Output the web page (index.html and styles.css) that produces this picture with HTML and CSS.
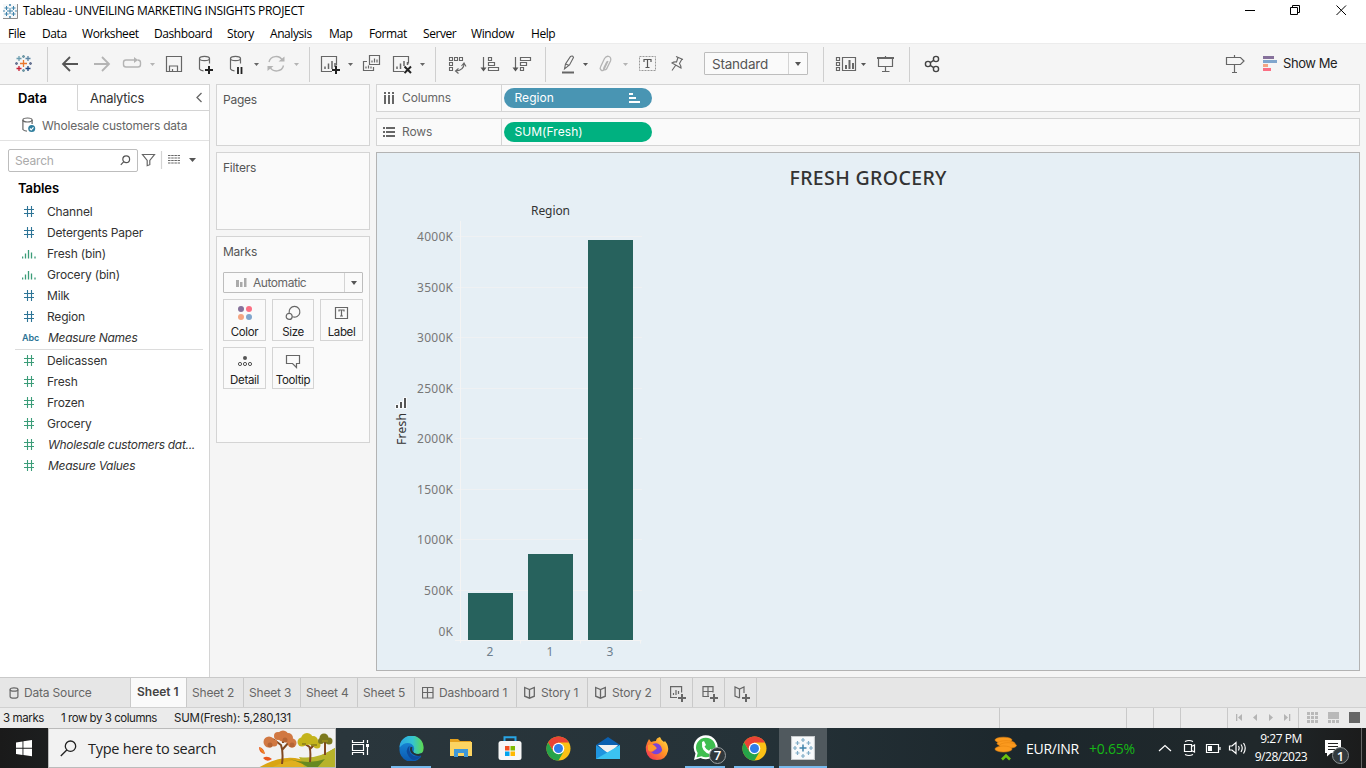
FILE: index.html
```html
<!DOCTYPE html>
<html lang="en">
<head>
<meta charset="utf-8">
<title>Tableau - UNVEILING MARKETING INSIGHTS PROJECT</title>
<link rel="stylesheet" href="styles.css">
</head>
<body>
<svg class="defs" width="0" height="0">
  <defs>
    <g id="hash"><path d="M1 4.5h10M1 8.5h10M4.5 1v11M8.5 1v11" fill="none" stroke="currentColor" stroke-width="1.1"/></g>
    <g id="bins"><path d="M.6 9.500v2M3.500 6.500v5M6.500 3v8.500M9.500 5.500v6M13 9.500v2" fill="none" stroke="currentColor" stroke-width="1.3"/></g>
    <g id="caret"><path d="M-2.500-1.500h5L0 1.500z"/></g>
    <g id="book" fill="none" stroke="#666" stroke-width="1.3"><path d="M.7 1.500 5.500 3.500l4.800-2v8.700L5.500 12.200.7 10.200zM5.500 3.500v8.500"/></g>
    <g id="chrome">
      <circle r="12" fill="#fbc116"/>
      <path d="M-10.400-6A12 12 0 0 1 10.400-6L0-6-5.200 3z" fill="#ea4335"/>
      <path d="M-10.400-6A12 12 0 0 0 0 12L5.200 3-5.200 3z" fill="#26a349"/>
      <circle r="5.800" fill="#fff"/><circle r="4.500" fill="#2f7de9"/>
    </g>
  </defs>
</svg>
<div class="app">
  <header class="titlebar">
    <svg width="23" height="22" viewBox="0 0 23 22"><path d="M3 4h14v14H3z" fill="#f6f8f9"/><path d="M3 18.500h14.500V4" fill="none" stroke="#8c8c8c"/><path d="M10 8v6M7 11h6M6.500 6v4M4.500 8h4M13.500 6v4M11.500 8h4M6.500 12v4M4.500 14h4M13.500 12v4M11.500 14h4M10 4v2M9 5h2M10 16v2M9 17h2M3 11h2M15 11h2" stroke="#3f83ab" fill="none"/></svg>
    <span class="win title">Tableau - UNVEILING MARKETING INSIGHTS PROJECT</span>
    <svg class="controls" width="140" height="22" viewBox="1226 0 140 22" fill="none" stroke="#000"><path d="M1245 10.500h10M1290.500 7.500h7v7h-7zM1292.500 7.500v-2h7v7h-2M1336.500 5.500l9.500 9.500M1346 5.500l-9.500 9.500"/></svg>
  </header>
  <nav class="menubar win">
    <span>File</span><span>Data</span><span>Worksheet</span><span>Dashboard</span><span>Story</span><span>Analysis</span><span>Map</span><span>Format</span><span>Server</span><span>Window</span><span>Help</span>
  </nav>
  <div class="toolbar">
    <svg width="47" height="40" viewBox="0 44 47 40" fill="none" stroke-width="1.300">
      <path d="M20 63.500h7M23.500 60v7" stroke="#e8762c"/><path d="M16.500 58.500h5M19 56v5" stroke="#6a9db0"/><path d="M25.500 58.500h5M28 56v5" stroke="#5c86a5"/><path d="M16.500 68.500h5M19 66v5" stroke="#c72035"/><path d="M25.500 68.500h5M28 66v5" stroke="#1f447e"/><path d="M22 56.500h3M23.500 55v3M22 70.500h3M23.500 69v3" stroke="#7199a6"/><path d="M15 63.500h3M16.500 62v3M29 63.500h3M30.500 62v3" stroke="#6b7795"/>
    </svg><i class="sep"></i>
    <svg width="40" height="40" viewBox="48 44 40 40" fill="none" stroke="#555" stroke-width="1.800"><path d="M78 64H63M70 57l-7 7 7 7"/></svg>
    <svg width="30" height="40" viewBox="88 44 30 40" fill="none" stroke="#b4b4b4" stroke-width="1.800"><path d="M94 64h15M102 57l7 7-7 7"/></svg>
    <svg width="42" height="40" viewBox="118 44 42 40" fill="none" stroke="#b4b4b4" stroke-width="1.400"><path d="M135 60h-9q-2.500 0-2.500 2.500v2q0 2.500 2.500 2.500h12q2.500 0 2.500-2.500v-2q0-2.500-3-2.500"/><path d="M134 57l4 3-4 3z" fill="#b4b4b4" stroke="none"/><use href="#caret" x="152.500" y="64.500" fill="#b4b4b4" stroke="none"/></svg>
    <svg width="30" height="40" viewBox="160 44 30 40" fill="none" stroke="#666" stroke-width="1.200"><path d="M166.500 56.500h15v15h-15zM169.500 71v-5h8v5M172.500 71v-2"/></svg>
    <svg width="32" height="40" viewBox="190 44 32 40" fill="none" stroke="#666" stroke-width="1.200"><ellipse cx="204.500" cy="58.500" rx="5" ry="2.200"/><path d="M199.500 58.500v10.500q1 1.700 4 1.900M209.500 58.500v5"/><path d="M205 70h8M209 66v8" stroke="#222" stroke-width="2"/></svg>
    <svg width="40" height="40" viewBox="222 44 40 40" fill="none" stroke="#666" stroke-width="1.200"><ellipse cx="235.500" cy="58.500" rx="5" ry="2.200"/><path d="M230.500 58.500v10.500q1 1.700 4 1.900M240.500 58.500v5"/><path d="M238 67v7M241.500 67v7" stroke="#222" stroke-width="1.800"/><use href="#caret" x="256.500" y="64.500" fill="#666" stroke="none"/></svg>
    <svg width="47" height="40" viewBox="262 44 47 40" fill="none" stroke="#b4b4b4" stroke-width="1.400"><path d="M269 62a7.200 7 0 0 1 13.500-1.500M283.500 65.500a7.200 7 0 0 1-13.500 1.500"/><path d="M278.500 61.500h6v-5zM273.500 66h-6v5z" fill="#b4b4b4" stroke="none"/><use href="#caret" x="296.500" y="64.500" fill="#b4b4b4" stroke="none"/></svg><i class="sep"></i>
    <svg width="47" height="40" viewBox="310 44 47 40" fill="none" stroke="#666" stroke-width="1.200"><path d="M332 71.500h-10.500v-15h15v9"/><path d="M325 69v-2.500M328.500 69v-5.500M332 69v-8M335 67v-4" stroke-width="1.500"/><path d="M332 70h8M336 66v8" stroke="#222" stroke-width="2"/><use href="#caret" x="350.500" y="64.500" fill="#666" stroke="none"/></svg>
    <svg width="29" height="40" viewBox="357 44 29 40" fill="none" stroke="#666" stroke-width="1.200"><path d="M369.500 55.500h10v9h-10zM367 61.500h-3.500v9h10v-3.500M372 62.500v-2M374.500 62.500v-4M377 62.500v-3M366 68.500v-2M368.500 68.500v-3M371 68.500v-2"/></svg>
    <svg width="49" height="40" viewBox="386 44 49 40" fill="none" stroke="#666" stroke-width="1.200"><path d="M404 71.500h-10.500v-15h15v7"/><path d="M397 69v-2.500M400.500 69v-5.500M404 66v-5M407.500 65v-3" stroke-width="1.500"/><path d="M404.500 66.500l6.500 6.500M411 66.500l-6.500 6.500" stroke="#222" stroke-width="2"/><use href="#caret" x="422.500" y="64.500" fill="#666" stroke="none"/></svg><i class="sep"></i>
    <svg width="37" height="40" viewBox="436 44 37 40" fill="none" stroke="#666" stroke-width="1.100"><path d="M449.500 57.500h3v3h-3zM454.500 57.500h3v3h-3zM459.500 57.500h3v3h-3zM449.500 62.500h3v3h-3zM449.500 67.500h3v3h-3zM464 64q0 6-8 7M461.500 66l2.500-3 2 3.500M458.500 68.500l-3 2.500 3 2.500"/></svg>
    <svg width="32" height="40" viewBox="473 44 32 40" fill="none" stroke="#666" stroke-width="1.200"><path d="M483.500 57v12M488.500 57.500h3v3h-3zM488.500 62.500h6v3h-6zM488.500 67.500h10v3h-10z"/><path d="M480.500 67.500h6l-3 4z" fill="#555" stroke="none"/></svg>
    <svg width="40" height="40" viewBox="505 44 40 40" fill="none" stroke="#666" stroke-width="1.200"><path d="M515.500 57v12M520.500 57.500h10v3h-10zM520.500 62.500h6v3h-6zM520.500 67.500h3v3h-3z"/><path d="M512.500 67.500h6l-3 4z" fill="#555" stroke="none"/></svg><i class="sep"></i>
    <svg width="46" height="40" viewBox="546 44 46 40" fill="none" stroke="#666" stroke-width="1.100"><path d="M564.500 69l1-5 5-7.500q2-1.500 3 1l-4 7.500zM565.500 64l4 1.500"/><path d="M562 72.500h12" stroke-width="2"/><use href="#caret" x="585.500" y="64.500" fill="#555" stroke="none"/></svg>
    <svg width="40" height="40" viewBox="592 44 40 40" fill="none" stroke="#b4b4b4" stroke-width="1.300"><path d="M608 61l-4 8.500q-1.500 2-3 .5t-.5-3l4-8.500q2-3 4.500-2t1.500 4.500l-4 8q-1.500 1.500-2.500.5-.6-.8 0-2l3-6"/><use href="#caret" x="625.500" y="64.500" fill="#b4b4b4" stroke="none"/></svg>
    <svg width="30" height="40" viewBox="632 44 30 40" fill="none" stroke="#999"><path d="M639.500 56.500h16v14h-16z" stroke-dasharray="2 1"/><path d="M644 62v-2.500h7V62M647.500 59.500v8M645.500 67.500h4" stroke="#555" stroke-width="1.200"/></svg>
    <svg width="42" height="40" viewBox="662 44 42 40" fill="none" stroke="#666" stroke-width="1.100"><path d="M676 56.500l7 3M678 57.500l-1.500 4.500q-2.500-.5-4.500 1l9 5q0-2.500-1.500-4.500l2.500-4.500M675.500 65.500l-3.500 5"/></svg>
    <div class="select"><span class="tb">Standard</span><b></b></div>
    <span class="gap15"></span><i class="sep"></i>
    <svg width="46" height="40" viewBox="824 44 46 40" fill="none" stroke="#666" stroke-width="1.200"><path d="M836.500 57.500h3v3h-3zM836.500 62.500h3v3h-3zM836.500 67.500h3v3h-3zM842.500 57.500h13v13h-13z"/><path d="M846 69v-4M849.500 69v-9M853 69v-6" stroke-width="2"/><use href="#caret" x="863.500" y="64.500" fill="#555" stroke="none"/></svg>
    <svg width="39" height="40" viewBox="870 44 39 40" fill="none" stroke="#666" stroke-width="1.200"><path d="M878.500 58v8.500h14V58M885.500 67v4.500M882 71.500h7.500M885.500 56v1"/><path d="M877 58h17" stroke-width="2"/></svg><i class="sep"></i>
    <svg width="40" height="40" viewBox="910 44 40 40" fill="none" stroke="#444" stroke-width="1.400"><circle cx="928" cy="64" r="2.600"/><circle cx="936" cy="59" r="2.600"/><circle cx="936" cy="69" r="2.600"/><path d="M930.200 62.600l3.500-2.200M930.200 65.400l3.500 2.200"/></svg>
    <svg class="push" width="33" height="40" viewBox="1220 44 33 40" fill="none" stroke="#666" stroke-width="1.200"><path d="M1226.500 57.500h14l3.500 3.500-3.500 3.500h-14zM1234.500 55v2.500M1234.500 65v7M1232 72.500h5"/></svg>
    <svg width="30" height="40" viewBox="1253 44 30 40"><path fill="#86719b" d="M1263 56h11v3h-11z"/><path fill="#80a6cd" d="M1263 60h14v3h-14z"/><path fill="#f4a582" d="M1263 64h5v3h-5z"/><path fill="#fb6f83" d="M1263 68h8v3h-8z"/></svg>
    <span class="tb showme">Show Me</span>
  </div>

  <main class="main">
    <aside class="side">
      <div class="sidetabs"><div class="stab on"><span>Data</span></div><div class="stab"><span>Analytics</span><svg width="8" height="12" viewBox="0 0 8 12"><path d="M6.500 1 2 5.500l4.500 4.500" fill="none" stroke="#666" stroke-width="1.300"/></svg></div></div>
      <div class="source"><svg width="14" height="16" viewBox="0 0 14 16" fill="none" stroke="#666" stroke-width="1.200"><ellipse cx="5.500" cy="3" rx="4.600" ry="2"/><path d="M.9 3v9.500q1 1.500 4 1.700M10.100 3v4"/><circle cx="9.700" cy="11.500" r="3.500" fill="#2f7e9e" stroke="none"/><path d="M7.900 11.500l1.300 1.400 2.300-2.600" stroke="#fff"/></svg><span>Wholesale customers data</span></div>
      <div class="searchrow">
        <div class="search"><span>Search</span><svg width="11" height="11" viewBox="0 0 11 11" fill="none" stroke="#555" stroke-width="1.200"><circle cx="6.200" cy="4.200" r="3.400"/><path d="M3.800 6.700.8 9.800"/></svg></div>
        <svg width="70" height="23" viewBox="138 149 70 23" fill="none" stroke="#666" stroke-width="1.200"><path d="M142.500 154.500h12l-4.700 6v4.200l-2.600 1v-5.200z"/><path d="M161.500 151v18" stroke="#d4d4d4"/><path d="M168 155.500h12M168 158h12M168 160.500h12M168 163h12" stroke-dasharray="2.500 .7"/><path d="M189 158h7l-3.500 4z" fill="#555" stroke="none"/></svg>
      </div>
      <div class="tables"><span>Tables</span></div>
      <ul class="fields dim">
        <li><svg width="15" height="13"><use href="#hash" x="1"/></svg><span>Channel</span></li>
        <li><svg width="15" height="13"><use href="#hash" x="1"/></svg><span>Detergents Paper</span></li>
        <li class="m"><svg width="15" height="13"><use href="#bins"/></svg><span>Fresh (bin)</span></li>
        <li class="m"><svg width="15" height="13"><use href="#bins"/></svg><span>Grocery (bin)</span></li>
        <li><svg width="15" height="13"><use href="#hash" x="1"/></svg><span>Milk</span></li>
        <li><svg width="15" height="13"><use href="#hash" x="1"/></svg><span>Region</span></li>
        <li class="it"><b class="abc">Abc</b><span>Measure Names</span></li>
      </ul>
      <ul class="fields mea">
        <li class="m"><svg width="15" height="13"><use href="#hash" x="1"/></svg><span>Delicassen</span></li>
        <li class="m"><svg width="15" height="13"><use href="#hash" x="1"/></svg><span>Fresh</span></li>
        <li class="m"><svg width="15" height="13"><use href="#hash" x="1"/></svg><span>Frozen</span></li>
        <li class="m"><svg width="15" height="13"><use href="#hash" x="1"/></svg><span>Grocery</span></li>
        <li class="m it"><svg width="15" height="13"><use href="#hash" x="1"/></svg><span>Wholesale customers dat...</span></li>
        <li class="m it"><svg width="15" height="13"><use href="#hash" x="1"/></svg><span>Measure Values</span></li>
      </ul>
    </aside>

    <section class="cards">
      <div class="card pages"><h3>Pages</h3></div>
      <div class="card filters"><h3>Filters</h3></div>
      <div class="card marks"><h3>Marks</h3>
        <div class="marktype"><svg width="11" height="12" viewBox="0 0 11 12"><path fill="#aaa" d="M0 3h3v7H0zM4 5h2.500v5H4zM8 1h2.500v9H8z"/></svg><span>Automatic</span><b></b></div>
        <div class="btns">
          <div class="btn"><svg width="16" height="16" viewBox="0 0 16 16"><circle cx="4" cy="4" r="3" fill="#86719b"/><circle cx="12" cy="4" r="3" fill="#fb6f83"/><circle cx="4" cy="12" r="3" fill="#f4a582"/><circle cx="12" cy="12" r="3" fill="#80a6cd"/></svg><span>Color</span></div>
          <div class="btn"><svg width="16" height="16" viewBox="0 0 16 16" fill="none" stroke="#666" stroke-width="1.200"><path d="M4.200 7.800A5.400 5.400 0 1 1 7.500 11.800"/><circle cx="4.200" cy="11.400" r="3"/></svg><span>Size</span></div>
          <div class="btn"><svg width="16" height="16" viewBox="0 0 16 16" fill="none" stroke="#666" stroke-width="1.200"><path d="M1.500 2.500h12v11h-12zM5 6.500v-1.500h5v1.500M7.500 5v6M6 11h3"/></svg><span>Label</span></div>
          <div class="btn"><svg width="16" height="16" viewBox="0 0 16 16" fill="none" stroke="#555"><circle cx="8" cy="5" r="2" fill="#555" stroke="none"/><circle cx="3" cy="11" r="1.600"/><circle cx="8" cy="11" r="1.600"/><circle cx="13" cy="11" r="1.600"/></svg><span>Detail</span></div>
          <div class="btn"><svg width="16" height="16" viewBox="0 0 16 16" fill="none" stroke="#666" stroke-width="1.200"><path d="M1.500 2.500h13v8h-3v4l-4-4h-6z"/></svg><span>Tooltip</span></div>
        </div>
      </div>
    </section>

    <section class="view">
      <div class="shelf"><div class="label"><svg width="12" height="14" viewBox="0 0 12 14"><path stroke="#666" stroke-width="2" d="M2 1v2M6 1v2M10 1v2M2 4v9M6 4v9M10 4v9"/></svg><span>Columns</span></div><div class="pill blue"><span>Region</span><svg width="11" height="10" viewBox="0 0 11 10"><path fill="#fff" d="M0 0h4v2H0zM0 4h7v2H0zM0 8h11v2H0z"/></svg></div></div>
      <div class="shelf"><div class="label"><svg width="12" height="14" viewBox="0 0 12 14"><path stroke="#666" stroke-width="2" d="M0 3h2M3 3h9M0 7h2M3 7h9M0 11h2M3 11h9"/></svg><span>Rows</span></div><div class="pill green"><span>SUM(Fresh)</span></div></div>
      <div class="canvas">
        <svg width="982" height="517" viewBox="377 153 982 517">
          <g class="grid"><path d="M455 236.500h187M455 287.500h187M455 337.500h187M455 388.500h187M455 438.500h187M455 489.500h187M455 539.500h187M455 590.500h187"/></g>
          <path class="axis" d="M460.500 221v422M455 640.500h186.500M520.500 640v3.500M580.500 640v3.500M640.500 640v3.500"/>
          <g class="bars"><rect x="468" y="593" width="45" height="47"/><rect x="528" y="554" width="45" height="86"/><rect x="588" y="240" width="45" height="400"/></g>
          <text class="ctitle" x="868" y="185" text-anchor="middle" textLength="157">FRESH GROCERY</text>
          <text class="chead" x="550.500" y="215" text-anchor="middle" textLength="39">Region</text>
          <g class="tick" text-anchor="end"><text x="453" y="241" textLength="36">4000K</text><text x="453" y="292" textLength="36">3500K</text><text x="453" y="342" textLength="36">3000K</text><text x="453" y="393" textLength="36">2500K</text><text x="453" y="443" textLength="36">2000K</text><text x="453" y="494" textLength="36">1500K</text><text x="453" y="544" textLength="36">1000K</text><text x="453" y="595" textLength="29">500K</text><text x="453" y="636" textLength="14.500">0K</text></g>
          <g class="tick cat" text-anchor="middle"><text x="490" y="656">2</text><text x="550" y="656">1</text><text x="610" y="656">3</text></g>
          <text class="chead" transform="translate(406 445) rotate(-90)" textLength="32">Fresh</text>
          <path d="M396 405h2v3h-2zM400 402h2v6h-2zM404 398h2v10h-2z" fill="#555" stroke="#fff" stroke-width="1.500" paint-order="stroke"/>
        </svg>
      </div>
    </section>
  </main>

  <div class="sheets">
    <div class="sh ds"><svg width="10" height="12" viewBox="0 0 10 12" fill="none" stroke="#666" stroke-width="1.200"><ellipse cx="5" cy="2.500" rx="3.900" ry="1.700"/><path d="M1.100 2.500v7q0 1.700 3.900 1.700t3.900-1.700v-7"/></svg><span>Data Source</span></div>
    <div class="sh on"><span>Sheet 1</span></div>
    <div class="sh s57"><span>Sheet 2</span></div><div class="sh s57"><span>Sheet 3</span></div><div class="sh s57"><span>Sheet 4</span></div><div class="sh s57"><span>Sheet 5</span></div>
    <div class="sh dash"><svg width="12" height="12" viewBox="0 0 12 12" fill="none" stroke="#666" stroke-width="1.200"><path d="M.5.5h10.500v10.500H.5zM5.500.5v10.500M.5 5.500h10.500"/></svg><span>Dashboard 1</span></div>
    <div class="sh st1"><svg width="12" height="13"><use href="#book"/></svg><span>Story 1</span></div>
    <div class="sh st2"><svg width="12" height="13"><use href="#book"/></svg><span>Story 2</span></div>
    <div class="sh add"><svg width="16" height="16" viewBox="0 0 16 16" fill="none" stroke="#666" stroke-width="1.200"><path d="M7 11.500H.6V.6h11v6M3.500 9V7M6 9V4M8.500 8V5"/><path d="M8 12h8M12 8v8" stroke-width="2"/></svg></div>
    <div class="sh add"><svg width="16" height="16" viewBox="0 0 16 16" fill="none" stroke="#666" stroke-width="1.200"><path d="M7 10.500H1V.6h10v6M6 .6v10M1 5.500h10"/><path d="M8 12h8M12 8v8" stroke-width="2"/></svg></div>
    <div class="sh add"><svg width="16" height="16" viewBox="0 0 16 16" fill="none" stroke="#666" stroke-width="1.200"><path d="M5.500 12 1 10V1l4.500 2L10 1v6M5.500 3v9"/><path d="M8 12h8M12 8v8" stroke-width="2"/></svg></div>
  </div>
  <div class="status">
    <span class="st a">3 marks</span><span class="st b">1 row by 3 columns</span><span class="st c">SUM(Fresh): 5,280,131</span>
    <svg width="367" height="20" viewBox="999 708 367 20"><path stroke="#c9c9c9" d="M999.500 708v20M1126.500 708v20M1153.500 708v20M1180.500 708v20M1227.500 708v20M1298.500 708v20"/><path fill="#b4b4b4" d="M1236 714h1.300v7h-1.300zM1242 714v7l-4-3.500zM1257 714v7l-4-3.500zM1269 714v7l4-3.500zM1284 714v7l4-3.500zM1289 714h1.300v7h-1.300z"/><path fill="#b9b9b9" d="M1307 712h3v3h-3zM1311 712h3v3h-3zM1315 712h3v3h-3zM1307 716h3v3h-3zM1311 716h3v3h-3zM1315 716h3v3h-3zM1307 720h3v3h-3zM1311 720h3v3h-3zM1315 720h3v3h-3zM1328 712h11v7h-11zM1328 720h3v3h-3zM1332 720h3v3h-3zM1336 720h3v3h-3z"/><path fill="#666" d="M1349 712h11v11h-11z"/></svg>
  </div>

  <footer class="taskbar win">
    <div class="start"><svg width="16" height="17" viewBox="0 0 16 17"><path fill="#fff" d="M0 2.500 6.500 1.500v6.200H0zM7.400 1.300 16 0v7.700H7.400zM0 8.700h6.500V15L0 14zM7.400 8.700H16v7.600l-8.600-1.200z"/></svg></div>
    <div class="tsearch"><svg width="17" height="17" viewBox="0 0 17 17" fill="none" stroke="#222" stroke-width="1.300"><circle cx="10.500" cy="6.200" r="5.200"/><path d="M6.800 10 .8 16"/></svg><span>Type here to search</span>
      <svg class="trees" width="77" height="38" viewBox="259 729 77 38">
        <path d="M259 768q20-12 37-10 14 2 24 10z" fill="#d9a514"/><path d="M280 768q28-3 56-20v20z" fill="#9aa51c"/><path d="M272 768q18-10 34-7l10 7z" fill="#e0b020"/><path d="M300 757q18 3 36-9v20h-30z" fill="#b7b32a"/><path d="M290 759q20 6 36 0l-8 9h-8q-8-6-20-9z" fill="#4b7b1d" opacity=".75"/>
        <path d="M283 764q1.500-12-1-19l-8-6M283 750l8-9M284 743V734M311 762q1-10-.5-15l-6-4M311 749l6-6M326 755v-15" stroke="#80471f" stroke-width="2" fill="none"/>
        <g fill="#d17842"><circle cx="284" cy="736" r="5.500"/><circle cx="279" cy="736" r="4"/><circle cx="289" cy="738" r="5"/><circle cx="270" cy="742" r="5.500"/><circle cx="275" cy="743" r="3.500"/><circle cx="293" cy="743" r="4.500"/></g>
        <g fill="#b56435"><circle cx="286" cy="740" r="2.500"/><circle cx="271" cy="745" r="2.500"/><circle cx="293" cy="745" r="2.500"/></g>
        <g fill="#c4b41c"><circle cx="308" cy="739" r="6"/><circle cx="303" cy="742" r="4.500"/><circle cx="314" cy="741" r="5"/><circle cx="318" cy="745" r="3.500"/></g>
        <g fill="#7d7a1f"><circle cx="325" cy="738" r="4.500"/><circle cx="330" cy="741" r="3.500"/><circle cx="322" cy="741" r="3"/></g><path d="M303 744h4M312 745h6M323 741h6" stroke="#96891b" stroke-width="2"/>
        <path d="M260 747q5 1 6 7-6-1-6-7zM264 758q4-3 9 1-5 4-9-1z" fill="#e9571e"/><path d="M261 748l4 5" stroke="#ed8b27" stroke-width="1.500"/>
      </svg>
    </div>
    <svg width="51" height="40" viewBox="336 728 51 40" fill="none" stroke="#fff" stroke-width="1.200"><path d="M352.500 740v2.500h11V740M352.500 755v-2.500h11v2.500M352.500 744.500h11v6h-11zM367.500 740v3M367.500 747v8"/><path d="M366 744h3v3h-3z" fill="#fff" stroke="none"/></svg>
    <div class="app1 run"><svg width="25" height="25" viewBox="-12.500 -12.500 25 25"><defs><linearGradient id="eg" x1="0" x2="1"><stop stop-color="#2aa7e4"/><stop offset=".55" stop-color="#35c4d0"/><stop offset="1" stop-color="#5fdb4b"/></linearGradient><linearGradient id="eb" x2="0" y2="1"><stop stop-color="#1a90dd"/><stop offset="1" stop-color="#0b58b0"/></linearGradient></defs><path d="M-12 0A12 12 0 0 1 0-12 12 12 0 0 1 12-1L9 9A12 12 0 0 1-12 0z" fill="url(#eb)"/><path d="M-12-1A12 12 0 0 1 12-1q.5 6.500-5 6.500-5.500 0-5-2.500 2-5-2-7.500-6-3-12 3.500z" fill="url(#eg)"/><path d="M-2-3q-5 5-1 10.500Q0 12 3 11.500 8 10 9.500 7q-7 2.500-10.500-2-2-4-1-8z" fill="#0d4a9c"/><path d="M0-1.500q-1.500 4 2 6.500 4 2.500 9 .5" fill="none" stroke="#263238" stroke-width="2"/></svg></div>
    <div class="app1"><svg width="22" height="20" viewBox="0 0 22 20"><path d="M0 1h8l2 2h11v15H0z" fill="#e5a11d"/><path d="M0 4h22v14H0z" fill="#fcd462"/><path d="M4 19v-8h14v8h-4v-4H8v4z" fill="#3f98d8"/></svg></div>
    <div class="app1"><svg width="24" height="26" viewBox="0 0 24 26"><path d="M6.500 8V2.200h11V8" fill="none" stroke="#28a5e5" stroke-width="2"/><rect x=".5" y="6" width="23" height="19" rx="2.500" fill="#f7f7f7"/><path fill="#f25022" d="M7 11h4.500v4.500H7z"/><path fill="#7fba00" d="M12.500 11H17v4.500h-4.500z"/><path fill="#00a4ef" d="M7 16.500h4.500V21H7z"/><path fill="#ffb900" d="M12.500 16.500H17V21h-4.500z"/></svg></div>
    <div class="app1"><svg width="25" height="25" viewBox="-12.500 -12.500 25 25"><use href="#chrome"/></svg></div>
    <div class="app1"><svg width="24" height="24" viewBox="0 0 24 24"><path fill="#0b60b0" d="M0 9 12 1l12 8-12 8z"/><path fill="#f2f2f2" d="M2 9h20l-9 10z"/><path fill="#1f95e0" d="M0 9l12 8 12-8v14H0z"/><path fill="#3bc2f1" d="M0 23 24 9v14z"/></svg></div>
    <div class="app1"><svg width="24" height="25" viewBox="0 0 24 25"><defs><linearGradient id="ff" x1="1" y1="0" x2="0" y2="1"><stop stop-color="#ffe347"/><stop offset=".45" stop-color="#ff9225"/><stop offset="1" stop-color="#f2225f"/></linearGradient></defs><path d="M2 7l2-4 2 3q3-1 5-1 0-3 4-4 1 3 4 5l1-1q4 5 3 10-2 9-11 9T1 15q-1-4 1-8z" fill="url(#ff)"/><path d="M8 8q4-2 7 1 4 5 0 8-5 3-9-1 2 0 4-2-4-1-2-6z" fill="#7a43d8"/><path d="M3 9q5-2 8 2 2 2-2 3-3 3-6 0z" fill="#ff9a2b"/></svg></div>
    <div class="app1 run"><svg class="wa" width="34" height="30" viewBox="0 0 34 30"><path d="M1 25l1.500-6.500A12 12 0 1 1 7.500 23z" fill="#fff"/><path d="M3.500 22.500l1.200-4.500a9.800 9.800 0 1 1 3.800 3.300z" fill="#3fbe50"/><path d="M9 7l2-1 2 4-1.500 1.500q1.500 3 4.500 4.200l1.500-1.700 3.700 2q0 3-4 3.200Q8 17 9 7z" fill="#fff"/><circle cx="24.500" cy="20.500" r="8" fill="#30383c" stroke="#9a9fa1"/><text x="24.500" y="25.200" text-anchor="middle" class="badge">7</text></svg></div>
    <div class="app1 run"><svg width="25" height="25" viewBox="-12.500 -12.500 25 25"><use href="#chrome"/></svg></div>
    <div class="app1 run act"><svg width="24" height="24" viewBox="0 0 24 24" fill="none" stroke="#3f83ab" stroke-width="1.200"><path d="M.5.500h23v23H.5z" fill="#f8fafb" stroke="#c6c9cb"/><path d="M12 8.500v7M8.500 12h7" stroke-width="1.500"/><path d="M12 2v4M10 4h4M12 18v4M10 20h4M4 10v4M2 12h4M20 10v4M18 12h4M6.500 5v4M4.500 7h4M17.500 5v4M15.500 7h4M6.500 15v4M4.500 17h4M17.500 15v4M15.500 17h4" opacity=".65"/></svg></div>
    <div class="tray">
      <svg width="24" height="26" viewBox="0 0 24 26"><g fill="#fb9a1e" stroke="#e5850f" stroke-width=".6"><ellipse cx="9.500" cy="5" rx="8.500" ry="2.800"/><ellipse cx="12" cy="8.500" rx="9" ry="2.800"/><ellipse cx="14" cy="10.500" rx="8.500" ry="2.800"/><ellipse cx="9.500" cy="14" rx="8.500" ry="3"/></g><path d="M8 24.500l4-4 4 4" fill="none" stroke="#6cc20e" stroke-width="2.600"/></svg>
      <span class="cur">EUR/INR</span><span class="pct">+0.65%</span>
      <svg width="100" height="40" viewBox="1150 728 100 40" fill="none" stroke="#fff" stroke-width="1.200"><path d="M1159 751l6-5.500 6 5.500M1184.500 744.500h7v7h-7zM1191.500 746.500l3-1.500v7l-3-1.500M1185 741.500q4-2 8 0M1185 754.500q4 2 8 0M1206.500 744.500h12v8h-12zM1220 747v3M1229.500 746h2.500l4-3.500v11l-4-3.500h-2.500zM1238.500 746q1.500 2 0 4.500M1241 744.500q2.500 3.500 0 7.500M1243.500 743q3.500 5 0 10.500"/><path d="M1208 746h4v5h-4z" fill="#fff" stroke="none"/></svg>
      <div class="clock"><span>9:27 PM</span><span>9/28/2023</span></div>
      <svg width="54" height="40" viewBox="1312 728 54 40"><path d="M1325 740h16v13h-10l-4 3.500V753h-2z" fill="#fff"/><path d="M1328 743.500h10M1328 746.500h10M1328 749.500h10" stroke="#222"/><circle cx="1340.500" cy="755.500" r="8" fill="#333a3d" stroke="#8d9294"/><text x="1340.500" y="760.500" text-anchor="middle" class="badge">1</text><path d="M1361.500 728v40" stroke="#666"/></svg>
    </div>
  </footer>
</div>
</body>
</html>
```
FILE: styles.css
```css
*{box-sizing:border-box}
body{margin:0;background:#f5f5f5;font-family:Inter,"Noto Sans",sans-serif;font-size:12px;letter-spacing:-.18px;color:#333}
svg{display:block;flex:none}
.defs{position:absolute}
.app{width:1366px;height:768px;display:flex;flex-direction:column;overflow:hidden}
.app span{white-space:nowrap}
.win{font-family:"Open Sans","Noto Sans",sans-serif}
.titlebar{height:22px;display:flex;align-items:center;background:#fff;color:#000;flex:none}
.title{font-size:12px;line-height:24px;letter-spacing:-.3px}
.controls{margin-left:auto}
.menubar{height:21px;flex:none;background:#fff;color:#000;padding-left:8px;display:grid;grid-template-columns:34px 40px 72px 73px 43px 59px 40px 54px 48px 60px 40px;line-height:23px;letter-spacing:-.42px}
.toolbar{height:41px;flex:none;border-top:1px solid #ececec;display:flex;align-items:flex-start}
.sep{width:1px;height:35px;margin-top:3px;background:#cfcfcf;flex:none}
.select{width:104px;height:23px;margin-top:8px;border:1px solid #bdbdbd;border-radius:1px;background:#fafafa;display:flex;align-items:center;padding-left:7px;color:#555}
.tb{font-size:13.500px;letter-spacing:-.21px}
.select b,.marktype b{margin-left:auto;width:19px;height:100%;border-left:1px solid #d4d4d4;display:flex;align-items:center;justify-content:center}
.select b::after,.marktype b::after{content:"";border:3.500px solid transparent;border-top:4px solid #555;border-bottom:0}
.gap15{width:15px}
.push{margin-left:auto}
.showme{width:83px;line-height:39px;color:#222;font-size:13px;letter-spacing:-.45px}
.main{height:593px;flex:none;display:flex}
.side{width:210px;background:#fff;border-right:1px solid #d4d4d4;border-top:1px solid #d4d4d4}
.sidetabs{height:26px;display:flex}
.stab{border-bottom:1px solid #d4d4d4;flex:1;display:flex;align-items:center;justify-content:space-between;padding:0 6px 0 12px;font-size:13px;letter-spacing:-.26px}
.stab.on{flex:0 0 78px;border-bottom-color:#fff;border-right:1px solid #d4d4d4;font-weight:600;color:#000;padding-left:18px;letter-spacing:0}
.source{height:30px;border-bottom:1px solid #e2e2e2;display:flex;align-items:center;padding:0 0 1px 22px;gap:6px;font-size:12px;letter-spacing:-.21px;color:#666}
.searchrow{display:flex;padding:8px 0 0 8px}
.search{flex:none;width:130px;height:23px;border:1px solid #bdbdbd;border-radius:2px;display:flex;align-items:center;justify-content:space-between;padding:0 6px;color:#aaa}
.tables{height:29px;line-height:32px;padding-left:18px;font-size:13px;font-weight:600;letter-spacing:-.07px;color:#000}
.fields{list-style:none;margin:0;padding:0}
.fields.mea{margin:1px 6px 0 15px;border-top:1px solid #dcdcdc}
.fields.mea li{padding-left:7px}
.fields li{height:21px;display:flex;align-items:center;padding-left:22px;gap:10px;color:#2d7496}
.fields li.m{color:#3b9c78}
.fields span{color:#333}
.fields .it span{font-style:italic;letter-spacing:-.3px;padding-left:1px}
.abc{width:15px;font-size:9px;font-weight:600;letter-spacing:-.1px}
.cards{width:154px;margin-left:6px;display:flex;flex-direction:column;gap:6px}
.card{border:1px solid #d4d4d4;background:#fafafa;padding:0 6px}
.card h3{margin:0;font-weight:400;font-size:12px;line-height:30px;height:35px;letter-spacing:-.24px;color:#555}
.pages{height:62px}
.filters{height:78px}
.marks{height:207px}
.marktype{height:21px;border:1px solid #bdbdbd;border-radius:1px;display:flex;align-items:center;padding-left:12px;color:#666;background:#fafafa;letter-spacing:-.45px}
.marktype span{margin-left:6px}
.marktype b{width:18px}
.btns{display:grid;grid-template-columns:43px 42px 43px;gap:6px;margin-top:6px}
.btn{height:42px;border:1px solid #d4d4d4;display:flex;flex-direction:column;align-items:center;padding-top:5px;line-height:23px;color:#222;font-size:11.500px;letter-spacing:-.35px}
.view{width:984px;margin-left:6px;display:flex;flex-direction:column;gap:6px}
.shelf{height:28px;border:1px solid #d4d4d4;background:#fafafa;display:flex;align-items:center}
.label{width:125px;height:26px;border-right:1px solid #d4d4d4;display:flex;align-items:center;padding-left:6px;gap:7px;color:#666;letter-spacing:-.14px}
.label span,.pill span{padding-bottom:1px}
.pill{width:148px;height:20px;border-radius:10px;margin-left:2px;color:#fff;display:flex;align-items:center;justify-content:space-between;padding:0 12px 0 10.500px;letter-spacing:.05px}
.blue{background:#4995b3}
.green{background:#00b180}
.canvas{height:519px;border:1px solid #b3b3b3;background:#e6eff5}
.canvas text{font-family:"Noto Sans",sans-serif;letter-spacing:0}
.grid{stroke:#eff1f3}
.axis{stroke:#f4f4f4;fill:none}
.bars{fill:#27625d}
.ctitle{font-size:19.500px;fill:#333;font-weight:500}
.chead{font-size:12px;fill:#333}
.tick{font-size:12px;fill:#777}
.cat{fill:#6e7f8e}
.sheets{height:31px;flex:none;border-top:1px solid #c9c9c9;border-bottom:1px solid #d0d0d0;background:#e6e6e6;display:flex;color:#666}
.sh{border-right:1px solid #c9c9c9;display:flex;align-items:center;padding-left:5px;gap:5px;height:29px}
.ds{width:131px;padding-left:9px}
.sh.on{width:56px;padding:0 0 2px 6px;background:#fafafa;font-weight:600;color:#444;letter-spacing:0}
.s57{width:57px}
.dash{width:102px;padding-left:7px}
.st1{width:71px;padding-left:7px}
.st2{width:73px;padding-left:7px}
.add{width:32px;padding:2px 0 0 9px}
.status{height:20px;flex:none;background:#ebebeb;display:flex;font-size:11.500px;line-height:20px;color:#222}
.st.a{width:58px;padding-left:3px;letter-spacing:-.4px}
.st.b{width:113px;margin-left:3px;letter-spacing:-.46px}
.st.c{letter-spacing:-.2px}
.status svg{margin-left:auto}
.taskbar{height:40px;flex:none;display:flex;background:linear-gradient(90deg,#1a1a1a,#2a363c 25%,#253238 55%,#1c272c 75%,#20282b 92%,#1b1b1b);color:#fff}
.start{width:48px;display:flex;align-items:center;justify-content:center}
.tsearch{width:288px;background:#f2f2f2;border:1px solid #bbb;display:flex;align-items:center;padding-left:11px;color:#222;font-size:14.500px;letter-spacing:-.28px}
.tsearch span{margin-left:11px}
.trees{margin-left:auto}
.app1{width:49px;display:flex;align-items:center;justify-content:center;position:relative}
.run::after{content:"";position:absolute;left:4px;bottom:0;width:40px;height:2px;background:#76b9ed}
.act{width:48px;background:#50595e}
.act::after{left:0;width:48px}
.wa{margin:4px 0 0 9px}
.tray{margin-left:auto;display:flex;align-items:center}
.cur,.pct{font-size:14px}
.cur{width:63px;margin-left:8px;letter-spacing:-.27px}
.pct{width:61px;color:#16b816;letter-spacing:-.22px}
.clock{width:62px;font-size:12px;letter-spacing:-.48px;display:flex;flex-direction:column;align-items:center;line-height:18px}
.badge{font:600 13px "Open Sans",sans-serif;fill:#fff}
```
